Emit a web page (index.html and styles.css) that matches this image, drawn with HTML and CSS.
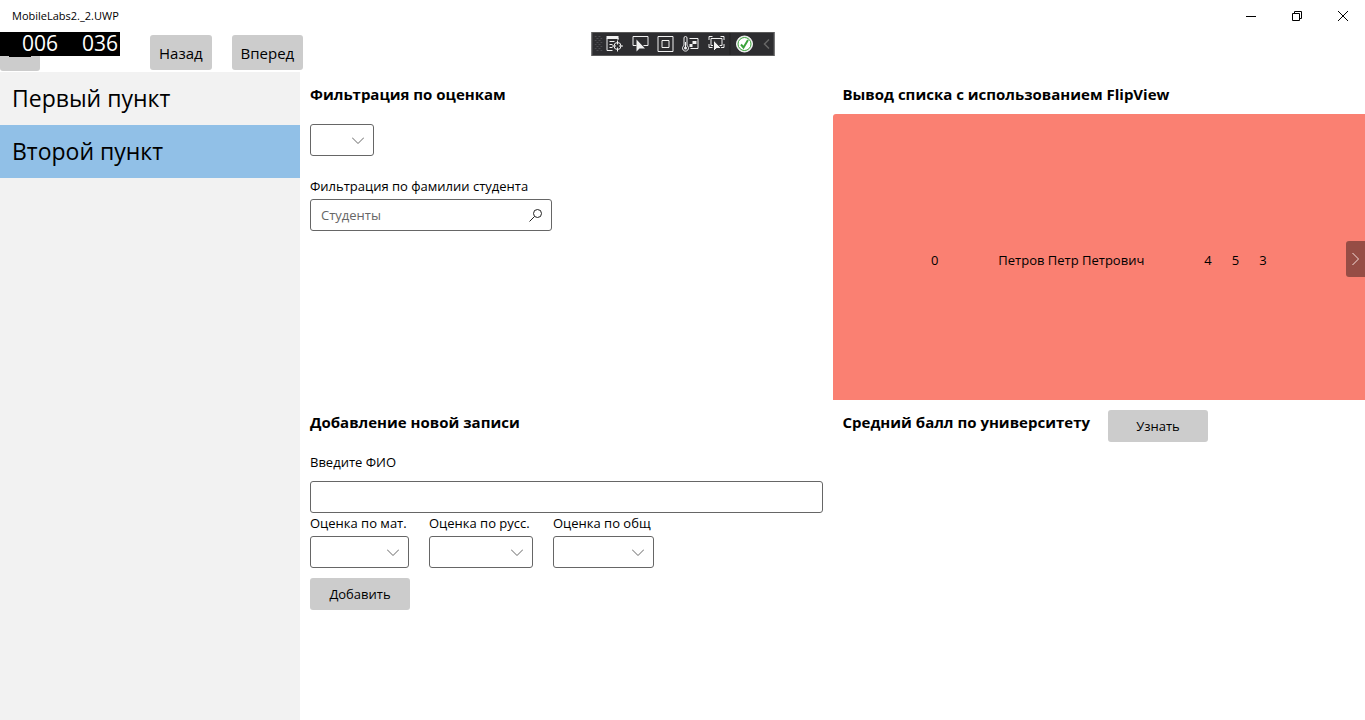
FILE: index.html
```html
<!DOCTYPE html>
<html lang="ru">
<head>
<meta charset="utf-8">
<title>MobileLabs2._2.UWP</title>
<link rel="stylesheet" href="styles.css">
</head>
<body>
<div class="window">
  <header class="titlebar">
    <span class="app-name">MobileLabs2._2.UWP</span>
    <div class="window-controls">
      <button class="window-button" aria-label="Свернуть"><svg width="10" height="10" viewBox="0 0 10 10"><path d="M0 5.5h10"/></svg></button>
      <button class="window-button" aria-label="Восстановить"><svg width="10" height="10" viewBox="0 0 10 10"><path d="M.5 2.5h7v7h-7zM2.500 2.500v-2h7v7h-2"/></svg></button>
      <button class="window-button" aria-label="Закрыть"><svg width="10" height="10" viewBox="0 0 10 10"><path d="M0 0l10 10M10 0L0 10"/></svg></button>
    </div>
  </header>

  <nav class="commands">
    <button class="menu-button" aria-label="Меню"><svg width="22" height="2" viewBox="0 0 22 2"><path d="M0 1h22" stroke="#000" stroke-width="2"/></svg></button>
    <button class="button nav-button">Назад</button>
    <button class="button nav-button">Вперед</button>
  </nav>

  <div class="frame-counter"><span>006</span><span>036</span></div>

  <div class="debug-bar">
    <svg class="grip" width="8" height="18" viewBox="0 0 8 18"><path d="M0 1.500h8M0 5.500h8M0 9.500h8M0 13.500h8" stroke-dasharray="2 2"/><path d="M2 3.500h6M2 7.500h6M2 11.500h6M2 15.500h6" stroke-dasharray="2 2"/></svg>
    <button class="tool" aria-label="Визуальное дерево"><svg width="18" height="18" viewBox="0 0 18 18"><path d="M7 15.500H1.500v-12M12.500 3v2M4 6.500h5M4 9.500h3M4 12.500h3"/><path d="M1 2.500h12" stroke-width="3"/><circle cx="12" cy="11" r="3.500"/><path d="M12 5.500v4M12 12.500v4M6.500 11h4M13.500 11h4"/></svg></button>
    <button class="tool" aria-label="Выбрать элемент"><svg width="18" height="18" viewBox="0 0 18 18"><path d="M5 10.500H1.500v-9h15v9H12"/><path class="solid" d="M5 4.500v12l3-3h5.500z"/></svg></button>
    <button class="tool" aria-label="Границы макета"><svg width="18" height="18" viewBox="0 0 18 18"><path d="M1.500 1.500h15v15h-15zM5.500 5.500h7v7h-7z"/></svg></button>
    <button class="tool" aria-label="Свойства"><svg width="18" height="18" viewBox="0 0 18 18"><path d="M2.500 10.500V3a1.500 1.500 0 0 1 3 0v7.500a3 3 0 1 1-3 0zM4 7v5M8 3.500h8.500v10H9"/><circle class="solid" cx="4" cy="13" r="1.500"/><path class="solid" d="M11 6h4v3h-4zM8 9h3v3H8z"/></svg></button>
    <button class="tool" aria-label="Отслеживать фокус"><svg width="18" height="18" viewBox="0 0 18 18"><path d="M1.500 5V1.500H5M13 1.500h3.500V5M1.500 9v3.500H5M16.500 9v3.500H13M6 10.500H3.500v-7h11v7H12"/><path d="M6 5v11.500l3-3h5z" fill="#f1f1f1" stroke="#2d2d30"/></svg></button>
    <button class="tool status" aria-label="Горячая перезагрузка"><svg width="18" height="18" viewBox="0 0 18 18"><circle cx="9" cy="9" r="8" fill="#f4f4f4" stroke="#f4f4f4"/><circle cx="9" cy="9" r="6.500" fill="#fff" stroke="#3aa33a"/><path d="M5.500 9.500l2.500 3 4.500-7.500" stroke="#3aa33a" stroke-width="2"/></svg></button>
    <button class="tool collapse" aria-label="Скрыть панель"><svg width="8" height="10" viewBox="0 0 8 10"><path d="M6.500 0.500L2 5l4.500 4.500" stroke="#666" stroke-width="1.500"/></svg></button>
  </div>

  <div class="body">
    <aside class="sidebar">
      <a class="side-item" href="#first">Первый пункт</a>
      <a class="side-item selected" href="#second" aria-current="page">Второй пункт</a>
    </aside>

    <main class="content">
      <section class="panel">
        <h2 id="grades">Фильтрация по оценкам</h2>
        <div class="combo combo-small">
          <select aria-labelledby="grades"><option></option></select>
          <svg width="12" height="7" viewBox="0 0 12 7"><path d="M0 .5l6 6 6-6"/></svg>
        </div>
        <div class="field search">
          <label for="student">Фильтрация по фамилии студента</label>
          <div class="search-box">
            <input id="student" type="text" placeholder="Студенты">
            <svg width="13" height="13" viewBox="0 0 13 13"><circle cx="8.500" cy="4.500" r="4"/><path d="M5.500 7.500L.5 12.500"/></svg>
          </div>
        </div>
      </section>

      <section class="panel list-panel">
        <h2>Вывод списка с использованием FlipView</h2>
        <div class="flip-view">
          <div class="student">
            <span class="student-id">0</span>
            <span class="student-name">Петров Петр Петрович</span>
            <span class="mark">4</span>
            <span class="mark">5</span>
            <span class="mark">3</span>
          </div>
          <button class="flip-next" aria-label="Далее"><svg width="7" height="12" viewBox="0 0 7 12"><path d="M.5 0l6 6-6 6"/></svg></button>
        </div>
      </section>

      <section class="panel">
        <h2>Добавление новой записи</h2>
        <label class="name-label" for="name">Введите ФИО</label>
        <input id="name" class="name-input" type="text">
        <div class="marks">
          <div class="field">
            <label for="math">Оценка по мат.</label>
            <div class="combo"><select id="math"><option></option></select><svg width="12" height="7" viewBox="0 0 12 7"><path d="M0 .5l6 6 6-6"/></svg></div>
          </div>
          <div class="field">
            <label for="russian">Оценка по русс.</label>
            <div class="combo"><select id="russian"><option></option></select><svg width="12" height="7" viewBox="0 0 12 7"><path d="M0 .5l6 6 6-6"/></svg></div>
          </div>
          <div class="field">
            <label for="social">Оценка по общ</label>
            <div class="combo"><select id="social"><option></option></select><svg width="12" height="7" viewBox="0 0 12 7"><path d="M0 .5l6 6 6-6"/></svg></div>
          </div>
        </div>
        <button class="button action">Добавить</button>
      </section>

      <section class="panel average">
        <h2>Средний балл по университету</h2>
        <button class="button action">Узнать</button>
      </section>
    </main>
  </div>
</div>
</body>
</html>
```
FILE: styles.css
```css
* { box-sizing: border-box; }

body {
  margin: 0;
  background: #fff;
  color: #000;
  font-family: "Segoe UI", "Open Sans", "Noto Sans", sans-serif;
  font-size: 13px;
  line-height: 20px;
}

button, input, select { font: inherit; color: inherit; margin: 0; }
button { border: 0; padding: 0; background: none; }
svg { display: block; fill: none; stroke: currentColor; }

.window { position: relative; min-height: 100vh; display: flex; flex-direction: column; }

.titlebar { display: flex; justify-content: space-between; align-items: center; height: 32px; padding-left: 12px; }
.app-name { font-size: 11px; }
.window-controls { display: flex; height: 100%; }
.window-button { width: 46px; padding-left: 2px; display: grid; place-items: center; }

.commands { display: flex; align-items: flex-start; height: 40px; }
.menu-button { width: 40px; height: 39px; border-radius: 3px; background: #ccc; display: grid; place-items: center; padding-top: 8px; }
.button { background: #ccc; border-radius: 3px; }
.nav-button { height: 35px; margin-top: 3px; margin-left: 20px; padding: 0 9px; font-size: 15px; }
.menu-button + .nav-button { margin-left: 110px; }

.frame-counter {
  position: absolute; top: 32px; left: 0; width: 120px; height: 24px; padding-right: 2px;
  display: flex; justify-content: flex-end; gap: 24px;
  background: #000; color: #fff; font-size: 21px; line-height: 22px;
}

.debug-bar {
  position: absolute; top: 32px; left: 50%; transform: translateX(-50%);
  display: flex; align-items: center; width: 183px; height: 24px; padding-left: 2px;
  background: #2d2d30; border: 1px solid #5a5a5a; color: #f1f1f1;
}
.grip { flex: none; color: #4c4c50; }
.tool { flex: 1; display: grid; place-items: center; height: 22px; }
.tool .solid { fill: currentColor; stroke: none; }
.status { flex: 0 0 30px; border-left: 1px solid #222; }
.collapse { flex: 0 0 14px; }

.body { flex: 1; display: grid; grid-template-columns: 300px 1fr; }

.sidebar { background: #f2f2f2; }
.side-item { display: block; height: 53px; padding-left: 12px; font-size: 23px; line-height: 53px; color: #000; text-decoration: none; }
.side-item.selected { background: #91c0e7; }

.content { display: grid; grid-template-columns: 1fr 1fr; grid-template-rows: 328fr 320fr; min-width: 0; }
.panel { display: flex; flex-direction: column; align-items: flex-start; padding: 10px; min-width: 0; }
h2 { margin: 0; font-size: 15px; font-weight: 700; line-height: 24px; }

input, select { height: 32px; border: 1px solid #666; border-radius: 3px; background: #fff; padding: 0 10px; outline: 0; }
.combo { display: grid; align-items: center; }
.combo select { grid-area: 1 / 1; width: 100%; appearance: none; }
.combo svg { grid-area: 1 / 1; justify-self: end; margin-right: 10px; color: #666; pointer-events: none; }
.combo-small { width: 64px; margin-top: 18px; }

.field { display: flex; flex-direction: column; gap: 3px; }
.search { margin-top: 20px; width: 242px; }
.search label { white-space: nowrap; }
.search-box { display: grid; align-items: center; }
.search-box input { grid-area: 1 / 1; width: 100%; }
.search-box input::placeholder { color: #666; opacity: 1; }
.search-box svg { grid-area: 1 / 1; justify-self: end; margin-right: 10px; color: #222; }

.list-panel { padding: 10px 0 0; }
.list-panel h2 { padding-left: 10px; }
.flip-view { position: relative; flex: 1; align-self: stretch; margin-top: 8px; padding-top: 4px; display: grid; place-items: center; background: #fa8072; border-top-left-radius: 3px; }
.student { display: flex; gap: 20px; padding-top: 2px; }
.student-id { margin-right: 40px; }
.student-name { margin-right: 40px; }
.flip-next { position: absolute; right: 0; top: calc(50% + 2px); width: 19px; height: 36px; transform: translateY(-50%); display: grid; place-items: center; background: #964d45; color: #f3dedb; border-radius: 3px 0 0 3px; }

.name-label { margin-top: 18px; }
.name-input { align-self: stretch; margin-top: 9px; }
.marks { display: grid; grid-template-columns: 99px 104px 101px; gap: 20px; }
.marks label { white-space: nowrap; }
.action { width: 100px; height: 32px; }
.marks + .action { margin-top: 10px; }
.average { flex-direction: row; gap: 18px; }
```
